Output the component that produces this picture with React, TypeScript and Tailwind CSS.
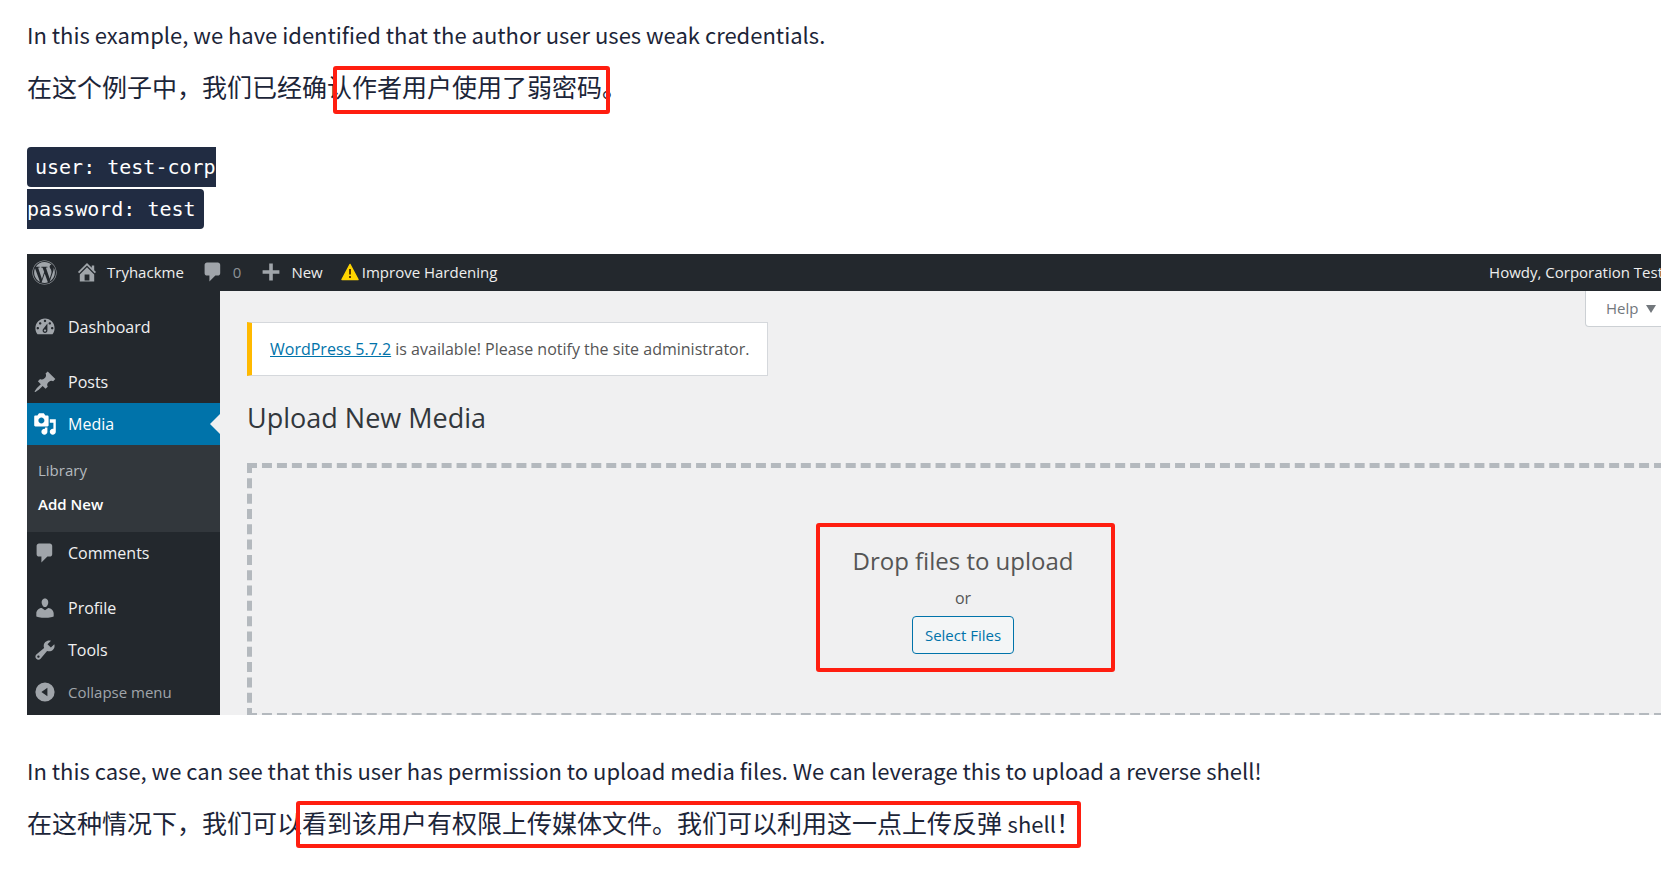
import React from 'react';
import { FaWordpress } from 'react-icons/fa';

interface IconProps {
  d: string;
  className?: string;
}

const icons = {
  home: 'M16 8.5l1.53 1.53-1.06 1.06L10 4.6l-6.47 6.49-1.06-1.06L10 2.5l4 4v-2h2v4zm-6-2.46l6 5.99V18H4v-5.97zM12 17v-5H8v5h4z',
  comment: 'M5 2h9c1.1 0 2 .9 2 2v7c0 1.1-.9 2-2 2h-2l-5 5v-5H5c-1.1 0-2-.9-2-2V4c0-1.1.9-2 2-2z',
  plus: 'M17 8.5v3h-5.5V17h-3v-5.500H3v-3h5.500V3h3v5.500z',
  dashboard:
    'M3.76 16h12.48c1.1-1.37 1.76-3.11 1.76-5 0-4.42-3.58-8-8-8s-8 3.58-8 8c0 1.89.66 3.63 1.76 5zM10 4c.55 0 1 .45 1 1s-.45 1-1 1-1-.45-1-1 .45-1 1-1zM6 6c.55 0 1 .45 1 1s-.45 1-1 1-1-.45-1-1 .45-1 1-1zm8 0c.55 0 1 .45 1 1s-.45 1-1 1-1-.45-1-1 .45-1 1-1zm-5.37 5.55L12 7v6c0 1.1-.9 2-2 2s-2-.9-2-2c0-.57.24-1.08.63-1.45zM4 10c.55 0 1 .45 1 1s-.45 1-1 1-1-.45-1-1 .45-1 1-1zm12 0c.55 0 1 .45 1 1s-.45 1-1 1-1-.45-1-1 .45-1 1-1zm-5 3c0-.55-.45-1-1-1s-1 .45-1 1 .45 1 1 1 1-.45 1-1z',
  pin: 'M10.44 3.02l1.82-1.82 6.36 6.35-1.83 1.82c-1.05-.68-2.48-.57-3.41.36l-.75.75c-.92.93-1.04 2.35-.35 3.41l-1.83 1.82-2.41-2.41-2.8 2.79c-.42.42-3.38 2.71-3.8 2.29s1.86-3.39 2.28-3.81l2.79-2.79L4.1 9.36l1.83-1.82c1.05.69 2.48.57 3.4-.36l.75-.75c.93-.92 1.05-2.35.36-3.41z',
  media:
    'M13 11V4c0-.55-.45-1-1-1h-1.67L9 1H5L3.67 3H2c-.55 0-1 .45-1 1v7c0 .55.45 1 1 1h10c.55 0 1-.45 1-1zM7 4.5c1.38 0 2.5 1.12 2.5 2.5S8.38 9.5 7 9.5 4.5 8.38 4.5 7 5.62 4.5 7 4.5zM14 6h5v10.5c0 1.38-1.12 2.5-2.5 2.5S14 17.88 14 16.5s1.12-2.5 2.5-2.5c.17 0 .34.02.5.05V9h-3V6zm-4 8.05V13h2v3.5c0 1.38-1.12 2.5-2.5 2.5S7 17.88 7 16.5 8.12 14 9.5 14c.17 0 .34.02.5.05z',
  user: 'M10 9.25c-2.27 0-2.73-3.44-2.73-3.44C7 4.02 7.82 2 9.97 2c2.16 0 2.98 2.02 2.71 3.81 0 0-.41 3.44-2.68 3.44zm0 2.57L12.72 10c2.39 0 4.52 2.33 4.52 4.53v2.49s-3.65 1.13-7.24 1.13c-3.65 0-7.24-1.13-7.24-1.13v-2.49c0-2.25 1.94-4.48 4.47-4.48z',
  tools:
    'M16.68 9.77c-1.34 1.34-3.3 1.67-4.95.99l-5.41 6.52c-.99.99-2.59.99-3.58 0s-.99-2.59 0-3.57l6.52-5.42c-.68-1.65-.35-3.61.99-4.95 1.28-1.28 3.12-1.62 4.72-1.06l-2.89 2.89 2.82 2.82 2.86-2.87c.53 1.58.18 3.39-1.08 4.65zM3.81 16.21c.4.39 1.04.39 1.43 0 .4-.4.4-1.04 0-1.43-.39-.4-1.03-.4-1.43 0-.39.39-.39 1.03 0 1.43z',
  collapse: 'M10 2a8 8 0 1 1 0 16a8 8 0 0 1 0-16zM12 6.500L7 10l5 3.500z',
};

const Icon: React.FC<IconProps> = ({ d, className = 'size-6' }) => (
  <svg viewBox="0 0 20 20" fill="currentColor" fillRule="evenodd" aria-hidden="true" className={`shrink-0 ${className}`}>
    <path d={d} />
  </svg>
);

const WarningIcon = () => (
  <svg viewBox="0 0 18 18" aria-hidden="true" className="size-[18px] shrink-0">
    <path d="M9 1.500L17 16.500H1z" fill="#ffd500" stroke="#ffd500" strokeWidth="1.500" strokeLinejoin="round" />
    <path d="M8 6h2v5.500H8zM8 13h2v2H8z" fill="#5b3a00" />
  </svg>
);

interface MenuItemProps {
  icon: string;
  label: string;
  active?: boolean;
}

const MenuItem: React.FC<MenuItemProps> = ({ icon, label, active }) => (
  <a
    href="#"
    className={`relative flex h-[42px] items-center gap-[11px] pl-[6px] text-base ${
      active ? 'bg-[#0073aa] text-white' : 'text-[#f0f0f1]'
    }`}
  >
    <Icon d={icon} className={active ? 'size-6 text-white' : 'size-6 text-[#a0a5aa]'} />
    {label}
    {active && (
      <span className="absolute right-0 top-[11px] border-y-[10px] border-r-[10px] border-y-transparent border-r-[#f0f0f1]" />
    )}
  </a>
);

const Highlight: React.FC<{ className: string }> = ({ className }) => (
  <span aria-hidden="true" className={`pointer-events-none absolute rounded-[3px] border-4 border-[#ff1e10] ${className}`} />
);

const AdminBar = () => (
  <header className="flex h-[37px] items-center bg-[#23282d] pb-px pl-[5px] text-[15px] text-[#eeeeee]">
    <a href="#" aria-label="WordPress">
      <FaWordpress className="size-[25px] text-[#a0a5aa]" />
    </a>
    <a href="#" className="ml-[18px] flex items-center gap-2">
      <Icon d={icons.home} className="size-6 text-[#a0a5aa]" />
      Tryhackme
    </a>
    <a href="#" className="ml-[17px] flex items-center gap-2 text-[#8d9196]">
      <Icon d={icons.comment} className="size-6 text-[#a0a5aa]" />
      0
    </a>
    <a href="#" className="ml-[18px] flex items-center gap-2">
      <Icon d={icons.plus} className="size-6 text-[#a0a5aa]" />
      New
    </a>
    <a href="#" className="ml-[18px] flex items-center gap-[3px]">
      <WarningIcon />
      Improve Hardening
    </a>
    <a href="#" className="-mr-0.5 ml-auto whitespace-nowrap">
      Howdy, Corporation Test
    </a>
  </header>
);

const Sidebar = () => (
  <nav className="flex w-[193px] shrink-0 flex-col bg-[#23282d] pt-[15px]">
    <MenuItem icon={icons.dashboard} label="Dashboard" />
    <div className="mt-[13px]">
      <MenuItem icon={icons.pin} label="Posts" />
    </div>
    <MenuItem icon={icons.media} label="Media" active />
    <div className="flex flex-col bg-[#32373c] pb-[11px] pl-[11px] pt-2 text-[15px] leading-[34px]">
      <a href="#" className="text-[#b4b9be]">Library</a>
      <a href="#" className="font-semibold text-white">Add New</a>
    </div>
    <MenuItem icon={icons.comment} label="Comments" />
    <div className="mt-[13px]">
      <MenuItem icon={icons.user} label="Profile" />
    </div>
    <MenuItem icon={icons.tools} label="Tools" />
    <button type="button" className="flex h-[42px] items-center gap-[11px] pl-[6px] text-[15px] text-[#a0a5aa]">
      <Icon d={icons.collapse} />
      Collapse menu
    </button>
  </nav>
);

const UploadPanel = () => (
  <main className="relative -mr-[18px] min-w-0 flex-1 pl-[27px] pt-[31px]">
    <button
      type="button"
      className="absolute right-0 top-0 flex h-9 w-[94px] items-center gap-2 rounded-b border border-t-0 border-[#ccd0d4] bg-white pl-5 text-[15px] text-[#72777c]"
    >
      Help
      <span className="border-x-[5px] border-t-8 border-x-transparent border-t-[#72777c]" />
    </button>
    <div className="w-fit border border-l-[5px] border-[#d5d8dc] border-l-[#ffb900] bg-white px-[18px] py-[13px] text-base leading-[26px] text-[#555555]">
      <a href="#" className="text-[#0073aa] underline">WordPress 5.7.2</a> is available! Please notify the site administrator.
    </div>
    <h1 className="mt-6 text-[27px] leading-9 text-[#32373c]">Upload New Media</h1>
    <div className="-mb-[3px] mt-[27px] flex h-[255px] flex-col items-center border-[5px] border-dashed border-[#b4b9be] pt-[55px] text-[#555555]">
      <div className="relative flex w-[300px] flex-col items-center pt-[22px]">
        <Highlight className="left-[3px] top-0 h-[149px] w-[299px]" />
        <p className="text-2xl leading-8">Drop files to upload</p>
        <p className="mt-[9px] text-base leading-6">or</p>
        <button
          type="button"
          className="mt-[6px] h-[38px] rounded border border-[#0073aa] bg-[#f3f5f6] px-3 text-[15px] text-[#0073aa]"
        >
          Select Files
        </button>
      </div>
    </div>
  </main>
);

const App = () => (
  <article className="overflow-hidden bg-white pb-6 pl-[27px] pt-2 font-['Noto_Sans_CJK_SC',sans-serif] text-[22px] text-[#1c2538]">
    <p className="leading-[52px]">In this example, we have identified that the author user uses weak credentials.</p>
    <p lang="zh-CN" className="relative text-[25px] leading-[52px]">
      在这个例子中，我们已经确认作者用户使用了弱密码。
      <Highlight className="left-[306px] top-[6px] h-12 w-[277px]" />
    </p>
    <pre className="mt-[35px] text-xl leading-[41px]">
      <code className="rounded bg-[#212c42] px-2 py-2 font-['DejaVu_Sans_Mono',monospace] text-white">{'user: test-corp\npassword: test'}</code>
    </pre>
    <figure className="mt-[23px] overflow-hidden bg-[#f0f0f1] font-['Open_Sans',sans-serif]">
      <AdminBar />
      <div className="flex">
        <Sidebar />
        <UploadPanel />
      </div>
    </figure>
    <p className="mt-[29px] leading-[52px]">
      In this case, we can see that this user has permission to upload media files. We can leverage this to upload a reverse shell!
    </p>
    <p lang="zh-CN" className="relative text-[25px] leading-[52px]">
      在这种情况下，我们可以看到该用户有权限上传媒体文件。我们可以利用这一点上传反弹 <span className="text-[22px]">shell</span>！
      <Highlight className="left-[269px] top-[5px] h-[47px] w-[785px]" />
    </p>
  </article>
);

export default App;
